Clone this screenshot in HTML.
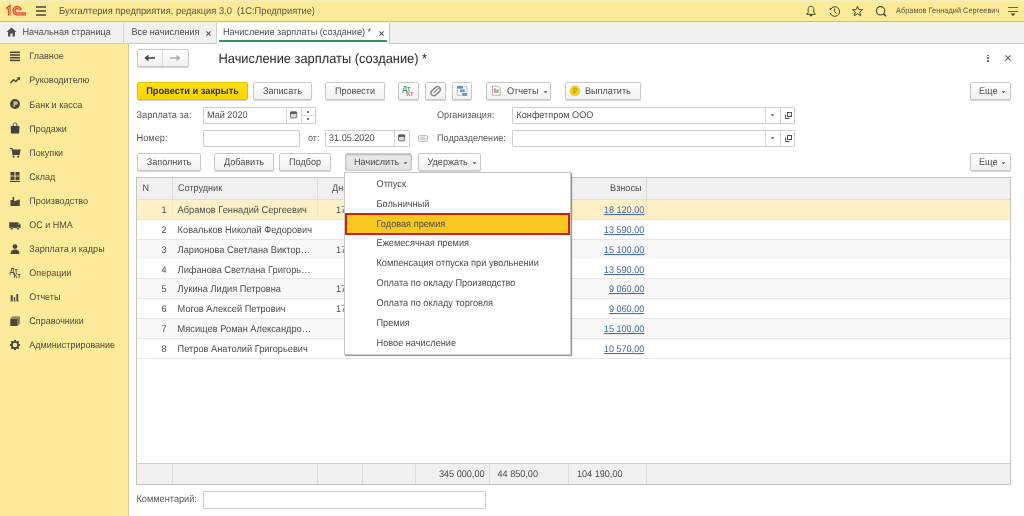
<!DOCTYPE html><html><head><meta charset="utf-8"><style>
*{margin:0;padding:0;box-sizing:border-box}
html,body{width:1024px;height:516px;overflow:hidden;background:#fff;font-family:"Liberation Sans",sans-serif}
.a{position:absolute}
.t{position:absolute;white-space:nowrap;text-rendering:geometricPrecision}
.btn{position:absolute;border:1px solid #c9c9c9;border-radius:2px;background:linear-gradient(#ffffff,#f1f1f1);box-shadow:0 1px 1px rgba(0,0,0,.18)}
.fld{position:absolute;border:1px solid #cfcfcf;border-radius:1px;background:#fff}
svg{position:absolute;overflow:visible}
</style></head><body><div style="position:absolute;left:0;top:0;width:1024px;height:516px;overflow:hidden;will-change:transform;background:#fff">
<div class="a" style="left:0px;top:0px;width:1024px;height:22px;background:#fbea98;border-bottom:1px solid #c9bb80"></div>
<div class="a" style="left:0px;top:0px;width:1024px;height:2px;background:#f4edbb"></div>
<div class="a" style="left:0px;top:22px;width:1024px;height:1px;background:#f8f6ea"></div>
<svg style="left:0px;top:0px" width="30" height="20" viewBox="0 0 30 20">
<path d="M6.4 8.9 L9.3 6.9 L9.3 15.6" stroke="#d8522f" stroke-width="2.7" fill="none" stroke-linejoin="miter"/>
<path d="M7.2 8.6 L9.4 7.3 L9.4 15.4" stroke="#f3b28c" stroke-width="0.7" fill="none"/>
<path d="M20.3 10.3 A3.2 3.2 0 1 0 17 13.9 L26 13.9" stroke="#d8522f" stroke-width="3.3" fill="none"/>
<path d="M20.3 10.3 A3.2 3.2 0 1 0 17 13.9 L26 13.9" stroke="#f3b28c" stroke-width="0.8" fill="none"/>
</svg>
<div class="a" style="left:36px;top:6.4px;width:10px;height:1.3px;background:#7a6e48"></div>
<div class="a" style="left:36px;top:10.4px;width:10px;height:1.3px;background:#7a6e48"></div>
<div class="a" style="left:36px;top:14.4px;width:10px;height:1.3px;background:#7a6e48"></div>
<div class="t " style="left:59px;top:4.0px;height:14px;line-height:14px;font-size:9.3px;color:#5b5442;transform:scaleY(1.06);transform-origin:0 10.22px;">Бухгалтерия предприятия, редакция 3.0&nbsp;&nbsp;(1С:Предприятие)</div>
<svg style="left:805px;top:5px" width="12" height="12" viewBox="0 0 12 12">
<path d="M6 1.2 C3.8 1.2 3.2 3 3.2 4.6 L3.2 7.2 L1.6 9.3 L10.4 9.3 L8.8 7.2 L8.8 4.6 C8.8 3 8.2 1.2 6 1.2 Z" stroke="#4a4431" stroke-width="1" fill="none"/>
<path d="M4.4 9.8 L7.6 9.8 C7.4 11 6.8 11.4 6 11.4 C5.2 11.4 4.6 11 4.4 9.8 Z" fill="#4a4431"/></svg>
<svg style="left:828px;top:5px" width="13" height="13" viewBox="0 0 13 13">
<path d="M2.6 4.2 A4.8 4.8 0 1 1 2.2 8" stroke="#4a4431" stroke-width="1" fill="none"/>
<path d="M1.2 3.2 L3.6 3.6 L2.4 5.6 Z" fill="#4a4431"/>
<path d="M6.6 3.6 L6.6 6.6 L8.4 8.6" stroke="#4a4431" stroke-width="1" fill="none"/></svg>
<svg style="left:851px;top:5px" width="13" height="13" viewBox="0 0 13 13">
<path d="M6.5 1.2 L7.9 4.6 L11.5 4.8 L8.7 7.1 L9.7 10.8 L6.5 8.7 L3.3 10.8 L4.3 7.1 L1.5 4.8 L5.1 4.6 Z" stroke="#4a4431" stroke-width="1" fill="none" stroke-linejoin="round"/></svg>
<svg style="left:875px;top:5px" width="13" height="13" viewBox="0 0 13 13">
<circle cx="5.6" cy="5.8" r="4.2" stroke="#4a4431" stroke-width="1.1" fill="none"/>
<path d="M8.6 8.8 L11 11.2" stroke="#4a4431" stroke-width="1.6"/></svg>
<div class="t " style="left:896px;top:4.0px;height:14px;line-height:14px;font-size:7.4px;color:#5b5442;transform:scaleY(1.06);transform-origin:0 9.56px;">Абрамов Геннадий Сергеевич</div>
<div class="a" style="left:1008px;top:7px;width:10px;height:1.2px;background:#6e6443"></div>
<div class="a" style="left:1008px;top:11px;width:10px;height:1.2px;background:#6e6443"></div>
<svg style="left:1010px;top:13px" width="6" height="4" viewBox="0 0 6 4"><path d="M0.5 0.5 L5.5 0.5 L3 3 Z" fill="#4a4431"/></svg>
<div class="a" style="left:0px;top:23px;width:1024px;height:21px;background:#f1f1f1;border-bottom:1px solid #c8c8c8"></div>
<svg style="left:6px;top:26.6px" width="11" height="10" viewBox="0 0 11 10">
<path d="M5.5 0.6 L10.4 5 L8.9 5 L8.9 9.4 L6.6 9.4 L6.6 6.6 L4.4 6.6 L4.4 9.4 L2.1 9.4 L2.1 5 L0.6 5 Z" fill="#4d4d4d"/></svg>
<div class="t " style="left:22.5px;top:25.0px;height:14px;line-height:14px;font-size:9.15px;color:#4d4d4d;transform:scaleY(1.06);transform-origin:0 10.17px;">Начальная страница</div>
<div class="a" style="left:123px;top:23px;width:1px;height:21px;background:#d2d2d2"></div>
<div class="t " style="left:131.5px;top:25.0px;height:14px;line-height:14px;font-size:9.15px;color:#4d4d4d;transform:scaleY(1.06);transform-origin:0 10.17px;">Все начисления</div>
<svg style="left:206px;top:30.8px" width="5" height="5" viewBox="0 0 5 5"><path d="M0.4 0.4 L4.6 4.6 M4.6 0.4 L0.4 4.6" stroke="#555" stroke-width="1.1"/></svg>
<div class="a" style="left:216px;top:23px;width:1px;height:21px;background:#d2d2d2"></div>
<div class="a" style="left:217px;top:23px;width:172px;height:21px;background:#fff"></div>
<div class="a" style="left:219px;top:40px;width:168px;height:1.7px;background:#3a8f62"></div>
<div class="t " style="left:223px;top:25.0px;height:14px;line-height:14px;font-size:9.15px;color:#4d4d4d;transform:scaleY(1.06);transform-origin:0 10.17px;">Начисление зарплаты (создание) *</div>
<svg style="left:379px;top:30.8px" width="5" height="5" viewBox="0 0 5 5"><path d="M0.4 0.4 L4.6 4.6 M4.6 0.4 L0.4 4.6" stroke="#555" stroke-width="1.1"/></svg>
<div class="a" style="left:389px;top:23px;width:1px;height:21px;background:#c4c4c4"></div>
<div class="a" style="left:0px;top:44px;width:128px;height:472px;background:#fdeb9b"></div>
<div class="a" style="left:128px;top:44px;width:1px;height:472px;background:#d2c994"></div>
<div class="t " style="left:29.3px;top:49.35px;height:14px;line-height:14px;font-size:9.0px;color:#514b39;transform:scaleY(1.06);transform-origin:0 10.12px;">Главное</div>
<div class="t " style="left:29.3px;top:73.43px;height:14px;line-height:14px;font-size:9.0px;color:#514b39;transform:scaleY(1.06);transform-origin:0 10.12px;">Руководителю</div>
<div class="t " style="left:29.3px;top:97.50999999999999px;height:14px;line-height:14px;font-size:9.0px;color:#514b39;transform:scaleY(1.06);transform-origin:0 10.12px;">Банк и касса</div>
<div class="t " style="left:29.3px;top:121.59px;height:14px;line-height:14px;font-size:9.0px;color:#514b39;transform:scaleY(1.06);transform-origin:0 10.12px;">Продажи</div>
<div class="t " style="left:29.3px;top:145.67px;height:14px;line-height:14px;font-size:9.0px;color:#514b39;transform:scaleY(1.06);transform-origin:0 10.12px;">Покупки</div>
<div class="t " style="left:29.3px;top:169.75px;height:14px;line-height:14px;font-size:9.0px;color:#514b39;transform:scaleY(1.06);transform-origin:0 10.12px;">Склад</div>
<div class="t " style="left:29.3px;top:193.82999999999998px;height:14px;line-height:14px;font-size:9.0px;color:#514b39;transform:scaleY(1.06);transform-origin:0 10.12px;">Производство</div>
<div class="t " style="left:29.3px;top:217.91px;height:14px;line-height:14px;font-size:9.0px;color:#514b39;transform:scaleY(1.06);transform-origin:0 10.12px;">ОС и НМА</div>
<div class="t " style="left:29.3px;top:241.98999999999998px;height:14px;line-height:14px;font-size:9.0px;color:#514b39;transform:scaleY(1.06);transform-origin:0 10.12px;">Зарплата и кадры</div>
<div class="t " style="left:29.3px;top:266.07px;height:14px;line-height:14px;font-size:9.0px;color:#514b39;transform:scaleY(1.06);transform-origin:0 10.12px;">Операции</div>
<div class="t " style="left:29.3px;top:290.15px;height:14px;line-height:14px;font-size:9.0px;color:#514b39;transform:scaleY(1.06);transform-origin:0 10.12px;">Отчеты</div>
<div class="t " style="left:29.3px;top:314.23px;height:14px;line-height:14px;font-size:9.0px;color:#514b39;transform:scaleY(1.06);transform-origin:0 10.12px;">Справочники</div>
<div class="t " style="left:29.3px;top:338.31px;height:14px;line-height:14px;font-size:9.0px;color:#514b39;transform:scaleY(1.06);transform-origin:0 10.12px;">Администрирование</div>
<svg style="left:10px;top:51.20px" width="10" height="10" viewBox="0 0 10 10" fill="#4b4839"><rect x="0" y="0.5" width="10" height="1.6"/><rect x="0" y="3.2" width="10" height="1.6"/><rect x="0" y="5.9" width="10" height="1.6"/><rect x="0" y="8.6" width="10" height="1.6"/></svg>
<svg style="left:10px;top:75.28px" width="10" height="10" viewBox="0 0 10 10" fill="#4b4839"><path d="M0.5 8 L3.5 4.8 L5.8 6.6 L9 3.2" stroke="#4b4839" stroke-width="1.5" fill="none"/><path d="M6.8 2.4 L10.2 2 L9.8 5.4 Z"/></svg>
<svg style="left:10px;top:99.36px" width="10" height="10" viewBox="0 0 10 10" fill="#4b4839"><circle cx="5" cy="5" r="4.9"/><path d="M3.4 8.1 L3.4 2.3 L5.9 2.3 C7.3 2.3 7.8 3.2 7.8 4.1 C7.8 5.1 7.2 5.9 5.9 5.9 L4.9 5.9 L4.9 8.1 Z" fill="#bdb9a2"/></svg>
<svg style="left:10px;top:123.44px" width="10" height="10" viewBox="0 0 10 10" fill="#4b4839"><path d="M0.7 2.9 L9.4 2.9 L9.2 10.5 L0.9 10.5 Z" fill="#3d414b"/><path d="M3.2 3 L3.2 1.4 C3.2 0.4 4 -0.1 5 -0.1 C6 -0.1 6.8 0.4 6.8 1.4 L6.8 3" stroke="#4a4a48" stroke-width="1" fill="none"/></svg>
<svg style="left:10px;top:147.52px" width="10" height="10" viewBox="0 0 10 10" fill="#4b4839"><path d="M0 0.5 L2 0.5 L3 6.5 L9 6.5 L10 2 L2.4 2" fill="none" stroke="#4b4839" stroke-width="1.2"/><path d="M2.4 2 L10 2 L9 6.5 L3 6.5 Z"/><circle cx="3.6" cy="8.6" r="1.1"/><circle cx="8.2" cy="8.6" r="1.1"/></svg>
<svg style="left:10px;top:171.60px" width="10" height="10" viewBox="0 0 10 10" fill="#4b4839"><rect x="0.5" y="0" width="4" height="3.6"/><rect x="5.5" y="0" width="4" height="3.6"/><rect x="0.5" y="4.4" width="4" height="3.6"/><rect x="5.5" y="4.4" width="4" height="3.6"/><rect x="0" y="8.8" width="10" height="1.2"/></svg>
<svg style="left:10px;top:195.68px" width="10" height="10" viewBox="0 0 10 10" fill="#4b4839"><path d="M0.5 10 L0.5 4 L2.6 4 L2.6 1 L4.2 1 L4.2 5.2 L9.8 3.2 L9.8 10 Z"/></svg>
<svg style="left:10px;top:219.76px" width="10" height="10" viewBox="0 0 10 10" fill="#4b4839"><path d="M-0.8 2.2 H7.8 L10.6 4.6 V8 H-0.8 Z"/><path d="M8 3.1 L9.7 4.7 L8 4.7 Z" fill="#e8dcc0"/><circle cx="1.8" cy="8.6" r="1.3" stroke="#fdeb9b" stroke-width="0.5"/><circle cx="8" cy="8.6" r="1.3" stroke="#fdeb9b" stroke-width="0.5"/></svg>
<svg style="left:10px;top:243.84px" width="10" height="10" viewBox="0 0 10 10" fill="#4b4839"><circle cx="5" cy="2.6" r="2.4"/><path d="M0.6 10 C0.6 6.8 2.4 5.6 5 5.6 C7.6 5.6 9.4 6.8 9.4 10 Z"/></svg>
<svg style="left:10px;top:267.92px" width="10" height="10" viewBox="0 0 10 10" fill="#4b4839"><text x="-0.2" y="5" font-size="6.6" font-weight="bold" font-family="Liberation Sans" fill="#575038">Дт</text><text x="3.6" y="10.2" font-size="6.6" font-weight="bold" font-family="Liberation Sans" fill="#575038">Кт</text></svg>
<svg style="left:10px;top:292.00px" width="10" height="10" viewBox="0 0 10 10" fill="#4b4839"><rect x="0.7" y="3.2" width="2" height="5.8"/><rect x="3.8" y="5.1" width="1.4" height="3.9"/><rect x="6.4" y="2.1" width="1.8" height="6.9"/><rect x="0.2" y="8.9" width="9.3" height="0.7" fill="#9a9478"/></svg>
<svg style="left:10px;top:316.08px" width="10" height="10" viewBox="0 0 10 10" fill="#4b4839"><path d="M0.3 2.6 L2.6 0.3 L9.8 0.3 L7.5 2.6 Z" fill="#8e8873"/><path d="M7.5 2.6 L9.8 0.3 L9.8 7.8 L7.5 10 Z" fill="#7b7662"/><rect x="0.3" y="2.6" width="7.2" height="7.4"/></svg>
<svg style="left:10px;top:340.16px" width="10" height="10" viewBox="0 0 10 10" fill="#4b4839"><circle cx="5" cy="5" r="3.1" fill="none" stroke="#4b4839" stroke-width="1.7"/><rect x="4.1" y="-0.1" width="1.8" height="2.4" transform="rotate(0 5 5)"/><rect x="4.1" y="-0.1" width="1.8" height="2.4" transform="rotate(45 5 5)"/><rect x="4.1" y="-0.1" width="1.8" height="2.4" transform="rotate(90 5 5)"/><rect x="4.1" y="-0.1" width="1.8" height="2.4" transform="rotate(135 5 5)"/><rect x="4.1" y="-0.1" width="1.8" height="2.4" transform="rotate(180 5 5)"/><rect x="4.1" y="-0.1" width="1.8" height="2.4" transform="rotate(225 5 5)"/><rect x="4.1" y="-0.1" width="1.8" height="2.4" transform="rotate(270 5 5)"/><rect x="4.1" y="-0.1" width="1.8" height="2.4" transform="rotate(315 5 5)"/></svg>
<div class="btn" style="left:137px;top:49px;width:52px;height:18px"></div>
<div class="a" style="left:162px;top:50px;width:1px;height:16px;background:#dedede"></div>
<svg style="left:144px;top:54px" width="12" height="8" viewBox="0 0 12 8"><path d="M11 4 L2 4" stroke="#444" stroke-width="1.6"/><path d="M0.5 4 L4.5 0.5 L4.5 7.5 Z" fill="#444"/></svg>
<svg style="left:169px;top:54px" width="12" height="8" viewBox="0 0 12 8"><path d="M1 4 L10 4" stroke="#aaa" stroke-width="1.4"/><path d="M11.5 4 L7.5 0.8 L7.5 7.2 Z" fill="#aaa"/></svg>
<div class="t " style="left:218.5px;top:49.5px;height:18px;line-height:18px;font-size:12.85px;color:#2b2b2b;transform:scaleY(1.06);transform-origin:0 13.45px;">Начисление зарплаты (создание) *</div>
<div class="a" style="left:987.3px;top:54.6px;width:1.6px;height:1.6px;background:#6a6a6a"></div>
<div class="a" style="left:987.3px;top:57.4px;width:1.6px;height:1.6px;background:#6a6a6a"></div>
<div class="a" style="left:987.3px;top:60.2px;width:1.6px;height:1.6px;background:#6a6a6a"></div>
<svg style="left:1005px;top:55px" width="6" height="6" viewBox="0 0 6 6"><path d="M0.4 0.4 L5.6 5.6 M5.6 0.4 L0.4 5.6" stroke="#5a5a5a" stroke-width="1.05"/></svg>
<div class="btn" style="left:137px;top:82px;width:111px;height:18px;background:linear-gradient(#ffe010,#f8d400);border-color:#e3c000"></div>
<div class="t " style="left:137px;top:84.0px;height:14px;line-height:14px;font-size:9.25px;color:#333;width:111px;text-align:center;transform:scaleY(1.06);transform-origin:0 10.21px;font-weight:bold;">Провести и закрыть</div>
<div class="btn" style="left:253px;top:82px;width:59px;height:18px;"></div>
<div class="t " style="left:253px;top:84.0px;height:14px;line-height:14px;font-size:9.1px;color:#4d4d4d;width:59px;text-align:center;transform:scaleY(1.06);transform-origin:0 10.15px;">Записать</div>
<div class="btn" style="left:325px;top:82px;width:60px;height:18px;"></div>
<div class="t " style="left:325px;top:84.0px;height:14px;line-height:14px;font-size:9.1px;color:#4d4d4d;width:60px;text-align:center;transform:scaleY(1.06);transform-origin:0 10.15px;">Провести</div>
<div class="btn" style="left:398px;top:82px;width:21px;height:18px;"></div>
<div class="t " style="left:398px;top:84.0px;height:14px;line-height:14px;font-size:9.1px;color:#4d4d4d;width:21px;text-align:center;transform:scaleY(1.06);transform-origin:0 10.15px;"></div>
<svg style="left:398px;top:82px" width="22" height="18" viewBox="0 0 22 18"><text x="4.6" y="8.8" font-size="6.6" font-weight="bold" font-family="Liberation Sans" fill="#3f9e70">Дт</text><text x="8.3" y="13.9" font-size="6.3" font-weight="bold" font-family="Liberation Sans" fill="#e07575">Кт</text></svg>
<div class="btn" style="left:425px;top:82px;width:21px;height:18px;"></div>
<div class="t " style="left:425px;top:84.0px;height:14px;line-height:14px;font-size:9.1px;color:#4d4d4d;width:21px;text-align:center;transform:scaleY(1.06);transform-origin:0 10.15px;"></div>
<svg style="left:425px;top:82px" width="22" height="18" viewBox="0 0 22 18"><g transform="rotate(-42 10.6 9.2)"><rect x="5.4" y="6.3" width="10.6" height="5.8" rx="2.9" fill="none" stroke="#8c8c8c" stroke-width="1.5"/><path d="M8.2 9.2 L16.6 9.2" stroke="#8c8c8c" stroke-width="1.1"/></g></svg>
<div class="btn" style="left:452px;top:82px;width:20px;height:18px;"></div>
<div class="t " style="left:452px;top:84.0px;height:14px;line-height:14px;font-size:9.1px;color:#4d4d4d;width:20px;text-align:center;transform:scaleY(1.06);transform-origin:0 10.15px;"></div>
<svg style="left:452px;top:82px" width="22" height="18" viewBox="0 0 22 18"><path d="M5.4 6.5 L5.4 13.4 L9.5 13.4" stroke="#b9d0e8" stroke-width="1.2" fill="none"/><path d="M12.2 4.6 L14.8 4.6 L14.8 10.2" stroke="#b9d0e8" stroke-width="1.2" fill="none"/><rect x="5" y="3.9" width="6.2" height="2.7" fill="#6d90bb"/><rect x="8" y="7.4" width="4.8" height="2.8" fill="#7499cf"/><rect x="10.2" y="11" width="5" height="2.9" fill="#6a95c6"/></svg>
<div class="btn" style="left:486px;top:82px;width:65px;height:18px;"></div>
<div class="t " style="left:486px;top:84.0px;height:14px;line-height:14px;font-size:9.1px;color:#4d4d4d;width:65px;text-align:center;transform:scaleY(1.06);transform-origin:0 10.15px;"></div>
<svg style="left:488px;top:82px" width="18" height="18" viewBox="0 0 18 18"><path d="M4.5 4.2 L10.2 4.2 L12.2 6.2 L12.2 13.2 L4.5 13.2 Z" fill="#fff" stroke="#a9a9b0" stroke-width="0.9"/><rect x="5.8" y="6.2" width="2" height="4.8" fill="#e58a8a"/><rect x="8.3" y="7.5" width="2.2" height="3.5" fill="#8fb070"/></svg>
<div class="t " style="left:507px;top:84.0px;height:14px;line-height:14px;font-size:9.1px;color:#4d4d4d;transform:scaleY(1.06);transform-origin:0 10.15px;">Отчеты</div>
<svg style="left:543px;top:90.5px" width="5" height="3" viewBox="0 0 5 3"><path d="M0.6 0.3 L4.4 0.3 L2.5 2.3 Z" fill="#555"/></svg>
<div class="btn" style="left:565px;top:82px;width:76px;height:18px;"></div>
<div class="t " style="left:565px;top:84.0px;height:14px;line-height:14px;font-size:9.1px;color:#4d4d4d;width:76px;text-align:center;transform:scaleY(1.06);transform-origin:0 10.15px;"></div>
<svg style="left:566px;top:82px" width="18" height="18" viewBox="0 0 18 18"><circle cx="8.9" cy="8.9" r="4.9" fill="#f3d21c"/><circle cx="8.9" cy="8.9" r="4.9" fill="none" stroke="#e9c000" stroke-width="0.6"/><path d="M8.1 11.6 L8.1 6.2 L9.6 6.2 C10.6 6.2 11 6.8 11 7.6 C11 8.4 10.6 9 9.6 9 L7.2 9 M7.2 10.3 L9.6 10.3" stroke="#c29a00" stroke-width="1" fill="none"/></svg>
<div class="t " style="left:585px;top:84.0px;height:14px;line-height:14px;font-size:9.1px;color:#4d4d4d;transform:scaleY(1.06);transform-origin:0 10.15px;">Выплатить</div>
<div class="btn" style="left:970px;top:82px;width:41px;height:18px;"></div>
<div class="t " style="left:970px;top:84.0px;height:14px;line-height:14px;font-size:9.1px;color:#4d4d4d;width:41px;text-align:center;transform:scaleY(1.06);transform-origin:0 10.15px;"></div>
<div class="t " style="left:979px;top:84.0px;height:14px;line-height:14px;font-size:9.1px;color:#4d4d4d;transform:scaleY(1.06);transform-origin:0 10.15px;">Еще</div>
<svg style="left:1001px;top:90.5px" width="5" height="3" viewBox="0 0 5 3"><path d="M0.6 0.3 L4.4 0.3 L2.5 2.3 Z" fill="#555"/></svg>
<div class="t " style="left:136.5px;top:108.1px;height:14px;line-height:14px;font-size:9.25px;color:#595959;transform:scaleY(1.06);transform-origin:0 10.21px;">Зарплата за:</div>
<div class="fld" style="left:203px;top:107px;width:113px;height:17px"></div>
<div class="a" style="left:286px;top:108px;width:1px;height:15px;background:#d8d8d8"></div>
<div class="a" style="left:301px;top:108px;width:1px;height:15px;background:#d8d8d8"></div>
<div class="a" style="left:302px;top:115px;width:13px;height:1px;background:#dcdcdc"></div>
<div class="t " style="left:207px;top:108.1px;height:14px;line-height:14px;font-size:9.1px;color:#4d4d4d;transform:scaleY(1.06);transform-origin:0 10.15px;">Май 2020</div>
<svg style="left:289.5px;top:111.3px" width="8" height="8" viewBox="0 0 8 8"><rect x="0.5" y="0.9" width="6.2" height="6" rx="0.7" fill="#d9d9d9" stroke="#6a6a6a" stroke-width="0.9"/><rect x="0.3" y="0.7" width="6.6" height="2.2" fill="#595959"/><rect x="1.6" y="0" width="1" height="1" fill="#888"/><rect x="4.6" y="0" width="1" height="1" fill="#888"/></svg>
<div class="a" style="left:307px;top:111px;width:1.6px;height:2px;background:#7a7a7a"></div>
<div class="a" style="left:307px;top:118.3px;width:1.6px;height:1.4px;background:#7a7a7a"></div>
<div class="t " style="left:437px;top:108.1px;height:14px;line-height:14px;font-size:9.1px;color:#595959;transform:scaleY(1.06);transform-origin:0 10.15px;">Организация:</div>
<div class="fld" style="left:512px;top:107px;width:283px;height:17px"></div>
<div class="a" style="left:765px;top:108px;width:1px;height:15px;background:#d8d8d8"></div>
<div class="a" style="left:780.3px;top:108px;width:1px;height:15px;background:#d8d8d8"></div>
<div class="t " style="left:516.5px;top:108.1px;height:14px;line-height:14px;font-size:9.1px;color:#4d4d4d;transform:scaleY(1.06);transform-origin:0 10.15px;">Конфетпром ООО</div>
<svg style="left:769.5px;top:114px" width="5" height="3" viewBox="0 0 5 3"><path d="M0.6 0.3 L4.4 0.3 L2.5 2.3 Z" fill="#555"/></svg>
<svg style="left:784.8px;top:111.8px" width="8" height="8" viewBox="0 0 8 8"><path d="M0.6 2.6 L0.6 6.5 L4.6 6.5" stroke="#555" stroke-width="1" fill="none"/><rect x="2.5" y="0.5" width="4" height="4" fill="none" stroke="#555" stroke-width="1"/></svg>
<div class="t " style="left:136.5px;top:131.1px;height:14px;line-height:14px;font-size:9.25px;color:#595959;transform:scaleY(1.06);transform-origin:0 10.21px;">Номер:</div>
<div class="fld" style="left:203px;top:130px;width:97px;height:17px"></div>
<div class="t " style="left:308px;top:131.1px;height:14px;line-height:14px;font-size:9.1px;color:#595959;transform:scaleY(1.06);transform-origin:0 10.15px;">от:</div>
<div class="fld" style="left:325px;top:130px;width:85px;height:17px"></div>
<div class="a" style="left:394px;top:131px;width:1px;height:15px;background:#d8d8d8"></div>
<div class="t " style="left:329px;top:131.1px;height:14px;line-height:14px;font-size:9.1px;color:#4d4d4d;transform:scaleY(1.06);transform-origin:0 10.15px;">31.05.2020</div>
<svg style="left:398px;top:133.6px" width="8" height="8" viewBox="0 0 8 8"><rect x="0.5" y="0.9" width="6.2" height="6" rx="0.7" fill="#d9d9d9" stroke="#6a6a6a" stroke-width="0.9"/><rect x="0.3" y="0.7" width="6.6" height="2.2" fill="#595959"/><rect x="1.6" y="0" width="1" height="1" fill="#888"/><rect x="4.6" y="0" width="1" height="1" fill="#888"/></svg>
<svg style="left:418px;top:135px" width="10" height="7" viewBox="0 0 10 7"><rect x="0.5" y="0.5" width="9" height="6" rx="1" fill="#ececec" stroke="#bdbdbd" stroke-width="0.9"/><rect x="2.6" y="1.8" width="4.8" height="3.2" fill="#d2d2d2"/></svg>
<div class="t " style="left:437px;top:131.1px;height:14px;line-height:14px;font-size:9.1px;color:#595959;transform:scaleY(1.06);transform-origin:0 10.15px;">Подразделение:</div>
<div class="fld" style="left:512px;top:130px;width:283px;height:17px"></div>
<div class="a" style="left:765px;top:131px;width:1px;height:15px;background:#d8d8d8"></div>
<div class="a" style="left:780.3px;top:131px;width:1px;height:15px;background:#d8d8d8"></div>
<svg style="left:769.5px;top:137px" width="5" height="3" viewBox="0 0 5 3"><path d="M0.6 0.3 L4.4 0.3 L2.5 2.3 Z" fill="#555"/></svg>
<svg style="left:784.8px;top:134.8px" width="8" height="8" viewBox="0 0 8 8"><path d="M0.6 2.6 L0.6 6.5 L4.6 6.5" stroke="#555" stroke-width="1" fill="none"/><rect x="2.5" y="0.5" width="4" height="4" fill="none" stroke="#555" stroke-width="1"/></svg>
<div class="btn" style="left:137px;top:153px;width:64px;height:18px;"></div>
<div class="t " style="left:137px;top:155.0px;height:14px;line-height:14px;font-size:9.1px;color:#4d4d4d;width:64px;text-align:center;transform:scaleY(1.06);transform-origin:0 10.15px;">Заполнить</div>
<div class="btn" style="left:214px;top:153px;width:60px;height:18px;"></div>
<div class="t " style="left:214px;top:155.0px;height:14px;line-height:14px;font-size:9.1px;color:#4d4d4d;width:60px;text-align:center;transform:scaleY(1.06);transform-origin:0 10.15px;">Добавить</div>
<div class="btn" style="left:279px;top:153px;width:52px;height:18px;"></div>
<div class="t " style="left:279px;top:155.0px;height:14px;line-height:14px;font-size:9.1px;color:#4d4d4d;width:52px;text-align:center;transform:scaleY(1.06);transform-origin:0 10.15px;">Подбор</div>
<div class="btn" style="left:345px;top:153px;width:67px;height:18px;background:linear-gradient(#ececec,#e2e2e2);box-shadow:inset 0 1px 2px rgba(0,0,0,.25);"></div>
<div class="t " style="left:345px;top:155.0px;height:14px;line-height:14px;font-size:9.1px;color:#4d4d4d;width:67px;text-align:center;transform:scaleY(1.06);transform-origin:0 10.15px;"></div>
<div class="t " style="left:354px;top:155.0px;height:14px;line-height:14px;font-size:9.1px;color:#4d4d4d;transform:scaleY(1.06);transform-origin:0 10.15px;">Начислить</div>
<svg style="left:402.5px;top:161.5px" width="5" height="3" viewBox="0 0 5 3"><path d="M0.6 0.3 L4.4 0.3 L2.5 2.3 Z" fill="#555"/></svg>
<div class="btn" style="left:418px;top:153px;width:63px;height:18px;"></div>
<div class="t " style="left:418px;top:155.0px;height:14px;line-height:14px;font-size:9.1px;color:#4d4d4d;width:63px;text-align:center;transform:scaleY(1.06);transform-origin:0 10.15px;"></div>
<div class="t " style="left:427.5px;top:155.0px;height:14px;line-height:14px;font-size:9.1px;color:#4d4d4d;transform:scaleY(1.06);transform-origin:0 10.15px;">Удержать</div>
<svg style="left:472px;top:161.5px" width="5" height="3" viewBox="0 0 5 3"><path d="M0.6 0.3 L4.4 0.3 L2.5 2.3 Z" fill="#555"/></svg>
<div class="btn" style="left:970px;top:153px;width:41px;height:18px;"></div>
<div class="t " style="left:970px;top:155.0px;height:14px;line-height:14px;font-size:9.1px;color:#4d4d4d;width:41px;text-align:center;transform:scaleY(1.06);transform-origin:0 10.15px;"></div>
<div class="t " style="left:979px;top:155.0px;height:14px;line-height:14px;font-size:9.1px;color:#4d4d4d;transform:scaleY(1.06);transform-origin:0 10.15px;">Еще</div>
<svg style="left:1001px;top:161.5px" width="5" height="3" viewBox="0 0 5 3"><path d="M0.6 0.3 L4.4 0.3 L2.5 2.3 Z" fill="#555"/></svg>
<div class="a" style="left:136px;top:177px;width:875px;height:308px;border:1px solid #c4c4c4;background:#fff"></div>
<div class="a" style="left:137px;top:178px;width:873px;height:22px;background:#f0f0f0;border-bottom:1px solid #dedede"></div>
<div class="a" style="left:172px;top:178px;width:1px;height:22px;background:#dcdcdc"></div>
<div class="a" style="left:317px;top:178px;width:1px;height:22px;background:#dcdcdc"></div>
<div class="a" style="left:362px;top:178px;width:1px;height:22px;background:#dcdcdc"></div>
<div class="a" style="left:415px;top:178px;width:1px;height:22px;background:#dcdcdc"></div>
<div class="a" style="left:489px;top:178px;width:1px;height:22px;background:#dcdcdc"></div>
<div class="a" style="left:568px;top:178px;width:1px;height:22px;background:#dcdcdc"></div>
<div class="a" style="left:646px;top:178px;width:1px;height:22px;background:#dcdcdc"></div>
<div class="t " style="left:142.5px;top:180.6px;height:14px;line-height:14px;font-size:9.1px;color:#4d4d4d;transform:scaleY(1.06);transform-origin:0 10.15px;">N</div>
<div class="t " style="left:178px;top:180.6px;height:14px;line-height:14px;font-size:9.1px;color:#4d4d4d;transform:scaleY(1.06);transform-origin:0 10.15px;">Сотрудник</div>
<div class="t " style="left:332px;top:180.6px;height:14px;line-height:14px;font-size:9.1px;color:#4d4d4d;transform:scaleY(1.06);transform-origin:0 10.15px;">Дни</div>
<div class="t " style="left:569px;top:180.6px;height:14px;line-height:14px;font-size:9.1px;color:#4d4d4d;width:72.5px;text-align:right;transform:scaleY(1.06);transform-origin:0 10.15px;">Взносы</div>
<div class="a" style="left:137px;top:199.8px;width:873px;height:20px;background:#fdf0c6;border-bottom:1px solid #e6e6e6"></div>
<div class="a" style="left:172px;top:199.8px;width:1px;height:19px;background:#f6e8bc"></div>
<div class="a" style="left:317px;top:199.8px;width:1px;height:19px;background:#f6e8bc"></div>
<div class="a" style="left:362px;top:199.8px;width:1px;height:19px;background:#f6e8bc"></div>
<div class="a" style="left:415px;top:199.8px;width:1px;height:19px;background:#f6e8bc"></div>
<div class="a" style="left:489px;top:199.8px;width:1px;height:19px;background:#f6e8bc"></div>
<div class="a" style="left:568px;top:199.8px;width:1px;height:19px;background:#f6e8bc"></div>
<div class="a" style="left:646px;top:199.8px;width:1px;height:19px;background:#f6e8bc"></div>
<div class="t " style="left:140px;top:203.0px;height:14px;line-height:14px;font-size:9.1px;color:#4d4d4d;width:26.5px;text-align:right;transform:scaleY(1.06);transform-origin:0 10.15px;">1</div>
<div class="t " style="left:177.6px;top:203.0px;height:14px;line-height:14px;font-size:9.25px;color:#4d4d4d;transform:scaleY(1.06);transform-origin:0 10.21px;">Абрамов Геннадий Сергеевич</div>
<div class="t " style="left:336px;top:203.0px;height:14px;line-height:14px;font-size:9.1px;color:#4d4d4d;transform:scaleY(1.06);transform-origin:0 10.15px;">17</div>
<div class="t " style="left:560px;top:203.0px;height:14px;line-height:14px;font-size:9.1px;color:#4469a8;width:84.3px;text-align:right;transform:scaleY(1.06);transform-origin:0 10.15px;"><span style="text-decoration:underline">18 120,00</span></div>
<div class="a" style="left:137px;top:219.66000000000003px;width:873px;height:20px;background:#fff;border-bottom:1px solid #e6e6e6"></div>
<div class="t " style="left:140px;top:222.86px;height:14px;line-height:14px;font-size:9.1px;color:#4d4d4d;width:26.5px;text-align:right;transform:scaleY(1.06);transform-origin:0 10.15px;">2</div>
<div class="t " style="left:177.6px;top:222.86px;height:14px;line-height:14px;font-size:9.25px;color:#4d4d4d;transform:scaleY(1.06);transform-origin:0 10.21px;">Ковальков Николай Федорович</div>
<div class="t " style="left:560px;top:222.86px;height:14px;line-height:14px;font-size:9.1px;color:#4469a8;width:84.3px;text-align:right;transform:scaleY(1.06);transform-origin:0 10.15px;"><span style="text-decoration:underline">13 590,00</span></div>
<div class="a" style="left:137px;top:239.52px;width:873px;height:20px;background:#f8f8f8;border-bottom:1px solid #e6e6e6"></div>
<div class="t " style="left:140px;top:242.72px;height:14px;line-height:14px;font-size:9.1px;color:#4d4d4d;width:26.5px;text-align:right;transform:scaleY(1.06);transform-origin:0 10.15px;">3</div>
<div class="t " style="left:177.6px;top:242.72px;height:14px;line-height:14px;font-size:9.25px;color:#4d4d4d;transform:scaleY(1.06);transform-origin:0 10.21px;">Ларионова Светлана Виктор…</div>
<div class="t " style="left:336px;top:242.72px;height:14px;line-height:14px;font-size:9.1px;color:#4d4d4d;transform:scaleY(1.06);transform-origin:0 10.15px;">17</div>
<div class="t " style="left:560px;top:242.72px;height:14px;line-height:14px;font-size:9.1px;color:#4469a8;width:84.3px;text-align:right;transform:scaleY(1.06);transform-origin:0 10.15px;"><span style="text-decoration:underline">15 100,00</span></div>
<div class="a" style="left:137px;top:259.38px;width:873px;height:20px;background:#fff;border-bottom:1px solid #e6e6e6"></div>
<div class="t " style="left:140px;top:262.58px;height:14px;line-height:14px;font-size:9.1px;color:#4d4d4d;width:26.5px;text-align:right;transform:scaleY(1.06);transform-origin:0 10.15px;">4</div>
<div class="t " style="left:177.6px;top:262.58px;height:14px;line-height:14px;font-size:9.25px;color:#4d4d4d;transform:scaleY(1.06);transform-origin:0 10.21px;">Лифанова Светлана Григорь…</div>
<div class="t " style="left:560px;top:262.58px;height:14px;line-height:14px;font-size:9.1px;color:#4469a8;width:84.3px;text-align:right;transform:scaleY(1.06);transform-origin:0 10.15px;"><span style="text-decoration:underline">13 590,00</span></div>
<div class="a" style="left:137px;top:279.24px;width:873px;height:20px;background:#f8f8f8;border-bottom:1px solid #e6e6e6"></div>
<div class="t " style="left:140px;top:282.44px;height:14px;line-height:14px;font-size:9.1px;color:#4d4d4d;width:26.5px;text-align:right;transform:scaleY(1.06);transform-origin:0 10.15px;">5</div>
<div class="t " style="left:177.6px;top:282.44px;height:14px;line-height:14px;font-size:9.25px;color:#4d4d4d;transform:scaleY(1.06);transform-origin:0 10.21px;">Лукина Лидия Петровна</div>
<div class="t " style="left:336px;top:282.44px;height:14px;line-height:14px;font-size:9.1px;color:#4d4d4d;transform:scaleY(1.06);transform-origin:0 10.15px;">17</div>
<div class="t " style="left:560px;top:282.44px;height:14px;line-height:14px;font-size:9.1px;color:#4469a8;width:84.3px;text-align:right;transform:scaleY(1.06);transform-origin:0 10.15px;"><span style="text-decoration:underline">9 060,00</span></div>
<div class="a" style="left:137px;top:299.1px;width:873px;height:20px;background:#fff;border-bottom:1px solid #e6e6e6"></div>
<div class="t " style="left:140px;top:302.3px;height:14px;line-height:14px;font-size:9.1px;color:#4d4d4d;width:26.5px;text-align:right;transform:scaleY(1.06);transform-origin:0 10.15px;">6</div>
<div class="t " style="left:177.6px;top:302.3px;height:14px;line-height:14px;font-size:9.25px;color:#4d4d4d;transform:scaleY(1.06);transform-origin:0 10.21px;">Могов Алексей Петрович</div>
<div class="t " style="left:336px;top:302.3px;height:14px;line-height:14px;font-size:9.1px;color:#4d4d4d;transform:scaleY(1.06);transform-origin:0 10.15px;">17</div>
<div class="t " style="left:560px;top:302.3px;height:14px;line-height:14px;font-size:9.1px;color:#4469a8;width:84.3px;text-align:right;transform:scaleY(1.06);transform-origin:0 10.15px;"><span style="text-decoration:underline">9 060,00</span></div>
<div class="a" style="left:137px;top:318.96000000000004px;width:873px;height:20px;background:#f8f8f8;border-bottom:1px solid #e6e6e6"></div>
<div class="t " style="left:140px;top:322.16px;height:14px;line-height:14px;font-size:9.1px;color:#4d4d4d;width:26.5px;text-align:right;transform:scaleY(1.06);transform-origin:0 10.15px;">7</div>
<div class="t " style="left:177.6px;top:322.16px;height:14px;line-height:14px;font-size:9.25px;color:#4d4d4d;transform:scaleY(1.06);transform-origin:0 10.21px;">Мясищев Роман Александро…</div>
<div class="t " style="left:560px;top:322.16px;height:14px;line-height:14px;font-size:9.1px;color:#4469a8;width:84.3px;text-align:right;transform:scaleY(1.06);transform-origin:0 10.15px;"><span style="text-decoration:underline">15 100,00</span></div>
<div class="a" style="left:137px;top:338.82px;width:873px;height:20px;background:#fff;border-bottom:1px solid #e6e6e6"></div>
<div class="t " style="left:140px;top:342.02px;height:14px;line-height:14px;font-size:9.1px;color:#4d4d4d;width:26.5px;text-align:right;transform:scaleY(1.06);transform-origin:0 10.15px;">8</div>
<div class="t " style="left:177.6px;top:342.02px;height:14px;line-height:14px;font-size:9.25px;color:#4d4d4d;transform:scaleY(1.06);transform-origin:0 10.21px;">Петров Анатолий Григорьевич</div>
<div class="t " style="left:560px;top:342.02px;height:14px;line-height:14px;font-size:9.1px;color:#4469a8;width:84.3px;text-align:right;transform:scaleY(1.06);transform-origin:0 10.15px;"><span style="text-decoration:underline">10 570,00</span></div>
<div class="a" style="left:137px;top:463px;width:873px;height:21px;background:#f0f0f0;border-top:1px solid #cfcfcf"></div>
<div class="a" style="left:172px;top:464px;width:1px;height:20px;background:#dcdcdc"></div>
<div class="a" style="left:317px;top:464px;width:1px;height:20px;background:#dcdcdc"></div>
<div class="a" style="left:362px;top:464px;width:1px;height:20px;background:#dcdcdc"></div>
<div class="a" style="left:415px;top:464px;width:1px;height:20px;background:#dcdcdc"></div>
<div class="a" style="left:489px;top:464px;width:1px;height:20px;background:#dcdcdc"></div>
<div class="a" style="left:568px;top:464px;width:1px;height:20px;background:#dcdcdc"></div>
<div class="a" style="left:646px;top:464px;width:1px;height:20px;background:#dcdcdc"></div>
<div class="t " style="left:420px;top:467.0px;height:14px;line-height:14px;font-size:9.1px;color:#4d4d4d;width:64.5px;text-align:right;transform:scaleY(1.06);transform-origin:0 10.15px;">345 000,00</div>
<div class="t " style="left:497.5px;top:467.0px;height:14px;line-height:14px;font-size:9.1px;color:#4d4d4d;transform:scaleY(1.06);transform-origin:0 10.15px;">44 850,00</div>
<div class="t " style="left:577px;top:467.0px;height:14px;line-height:14px;font-size:9.1px;color:#4d4d4d;transform:scaleY(1.06);transform-origin:0 10.15px;">104 190,00</div>
<div class="t " style="left:136.5px;top:492.0px;height:14px;line-height:14px;font-size:9.2px;color:#595959;transform:scaleY(1.06);transform-origin:0 10.19px;">Комментарий:</div>
<div class="fld" style="left:203px;top:491px;width:283px;height:17.5px"></div>
<div class="a" style="left:344px;top:172px;width:227px;height:182.5px;background:#fff;border:1px solid #c6c6c6;box-shadow:1px 1px 1px rgba(0,0,0,.38)"></div>
<div class="a" style="left:345px;top:212.5px;width:225px;height:22.5px;background:#f8c81e;border:2px solid #d4200a"></div>
<div class="t " style="left:376.5px;top:176.8px;height:14px;line-height:14px;font-size:9.2px;color:#4d4d4d;transform:scaleY(1.06);transform-origin:0 10.19px;">Отпуск</div>
<div class="t " style="left:376.5px;top:196.65px;height:14px;line-height:14px;font-size:9.2px;color:#4d4d4d;transform:scaleY(1.06);transform-origin:0 10.19px;">Больничный</div>
<div class="t " style="left:376.5px;top:216.5px;height:14px;line-height:14px;font-size:9.2px;color:#4d4d4d;transform:scaleY(1.06);transform-origin:0 10.19px;">Годовая премия</div>
<div class="t " style="left:376.5px;top:236.35000000000002px;height:14px;line-height:14px;font-size:9.2px;color:#4d4d4d;transform:scaleY(1.06);transform-origin:0 10.19px;">Ежемесячная премия</div>
<div class="t " style="left:376.5px;top:256.20000000000005px;height:14px;line-height:14px;font-size:9.2px;color:#4d4d4d;transform:scaleY(1.06);transform-origin:0 10.19px;">Компенсация отпуска при увольнении</div>
<div class="t " style="left:376.5px;top:276.05px;height:14px;line-height:14px;font-size:9.2px;color:#4d4d4d;transform:scaleY(1.06);transform-origin:0 10.19px;">Оплата по окладу Производство</div>
<div class="t " style="left:376.5px;top:295.90000000000003px;height:14px;line-height:14px;font-size:9.2px;color:#4d4d4d;transform:scaleY(1.06);transform-origin:0 10.19px;">Оплата по окладу торговля</div>
<div class="t " style="left:376.5px;top:315.75px;height:14px;line-height:14px;font-size:9.2px;color:#4d4d4d;transform:scaleY(1.06);transform-origin:0 10.19px;">Премия</div>
<div class="t " style="left:376.5px;top:335.6px;height:14px;line-height:14px;font-size:9.2px;color:#4d4d4d;transform:scaleY(1.06);transform-origin:0 10.19px;">Новое начисление</div>
</div></body></html>
